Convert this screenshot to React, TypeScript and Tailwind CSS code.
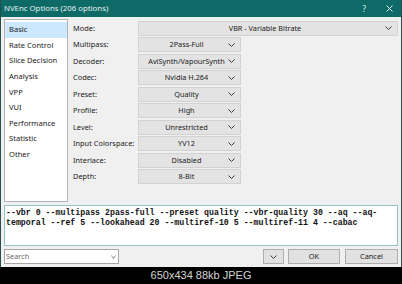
import React from "react";

const Chevron = ({ color = "#3a3a3a", w = 7 }: { color?: string; w?: number }) => (
  <svg width={w} height={4} viewBox={`0 0 ${w} 4`} className="shrink-0">
    <path d={`M0.5 0.5 L${w / 2} 3.5 L${w - 0.5} 0.5`} fill="none" stroke={color} strokeWidth="1" />
  </svg>
);

const navItems = ["Basic", "Rate Control", "Slice Decision", "Analysis", "VPP", "VUI", "Performance", "Statistic", "Other"];

const rows: [string, string][] = [
  ["Mode:", "VBR - Variable Bitrate"],
  ["Multipass:", "2Pass-Full"],
  ["Decoder:", "AviSynth/VapourSynth"],
  ["Codec:", "Nvidia H.264"],
  ["Preset:", "Quality"],
  ["Profile:", "High"],
  ["Level:", "Unrestricted"],
  ["Input Colorspace:", "YV12"],
  ["Interlace:", "Disabled"],
  ["Depth:", "8-Bit"],
];

export default function App() {
  const ui = { fontFamily: '"Noto Sans", "Open Sans", sans-serif' };
  return (
    <div className="w-[402px] h-[284px] bg-black flex flex-col overflow-hidden">
      <div className="w-[402px] h-[267px] flex flex-col bg-[#f0f0f0] border-x border-[#26504e]" style={ui}>
        {/* title bar */}
        <div className="h-[17px] bg-[#0d6a67] flex items-center pl-[3px] pr-[8px] text-[#e6f2f1]">
          <span className="text-[7.8px] leading-none">NVEnc Options (206 options)</span>
          <div className="flex-1" />
          <span className="text-[8px] leading-none mr-[20px]">?</span>
          <svg width="7" height="7" viewBox="0 0 7 7">
            <path d="M0.5 0.5 L6.5 6.5 M6.5 0.5 L0.5 6.5" stroke="#e6f2f1" strokeWidth="1" />
          </svg>
        </div>
        {/* body */}
        <div className="flex flex-col px-[3px]">
          <div className="flex pt-[2px]">
            <div className="w-[64px] h-[183px] bg-white border border-[#b4b4b4] pt-[2px] flex flex-col shrink-0">
              {navItems.map((n, i) => (
                <div
                  key={n}
                  className={`h-[15.625px] flex items-center pl-[4px] text-[7.6px] text-[#1a1a1a] leading-none ${i === 0 ? "bg-[#cce8ff]" : ""}`}
                >
                  {n}
                </div>
              ))}
            </div>
            <div className="flex-1 flex flex-col pt-[1px] pl-[5px]">
              {rows.map(([label, value], i) => (
                <div key={label} className="h-[16.5px] flex items-center">
                  <div className="w-[65px] text-[7.4px] text-[#1a1a1a] leading-none whitespace-nowrap">{label}</div>
                  <div
                    className={`${i === 0 ? "flex-1" : "w-[103px]"} h-[15px] bg-[#e3e3e3] border border-[#d2d2d2] flex items-center pl-[6px] pr-[5px]`}
                  >
                    <span className="flex-1 text-center text-[7.3px] text-[#1a1a1a] leading-none whitespace-nowrap">{value}</span>
                    <Chevron />
                  </div>
                </div>
              ))}
            </div>
          </div>
          {/* command line */}
          <div
            className="mt-[3px] h-[41px] bg-white border border-[#93c3c2] pl-[1px] pt-[2px] text-[8.25px] leading-[10px] text-[#111] font-bold"
            style={{ fontFamily: '"Liberation Mono", monospace' }}
          >
            <div className="whitespace-pre">--vbr 0 --multipass 2pass-full --preset quality --vbr-quality 30 --aq --aq-</div>
            <div className="whitespace-pre">temporal --ref 5 --lookahead 20 --multiref-10 5 --multiref-11 4 --cabac</div>
          </div>
          {/* bottom row */}
          <div className="mt-[3px] h-[15px] flex items-center">
            <div className="w-[115px] h-[15px] bg-white border border-[#a6a6a6] flex items-center pl-[1px] pr-[2px]">
              <span className="flex-1 text-[7.4px] text-[#6e6e6e] leading-none">Search</span>
              <Chevron color="#8a8a8a" w={5} />
            </div>
            <div className="flex-1" />
            <div className="w-[21px] h-[15px] bg-[#e1e1e1] border border-[#adadad] flex items-center justify-center">
              <Chevron />
            </div>
            <div className="ml-[4px] w-[52px] h-[15px] bg-[#e1e1e1] border border-[#adadad] flex items-center justify-center text-[7.4px] text-[#1a1a1a] leading-none">
              OK
            </div>
            <div className="ml-[5px] w-[53px] h-[15px] bg-[#e1e1e1] border border-[#adadad] flex items-center justify-center text-[7.4px] text-[#1a1a1a] leading-none">
              Cancel
            </div>
          </div>
        </div>
      </div>
      <div className="flex-1 flex items-center justify-center text-[11px] text-[#d4d4d4]" style={{ fontFamily: '"Liberation Sans", Arial, sans-serif' }}>
        650x434 88kb JPEG
      </div>
    </div>
  );
}
